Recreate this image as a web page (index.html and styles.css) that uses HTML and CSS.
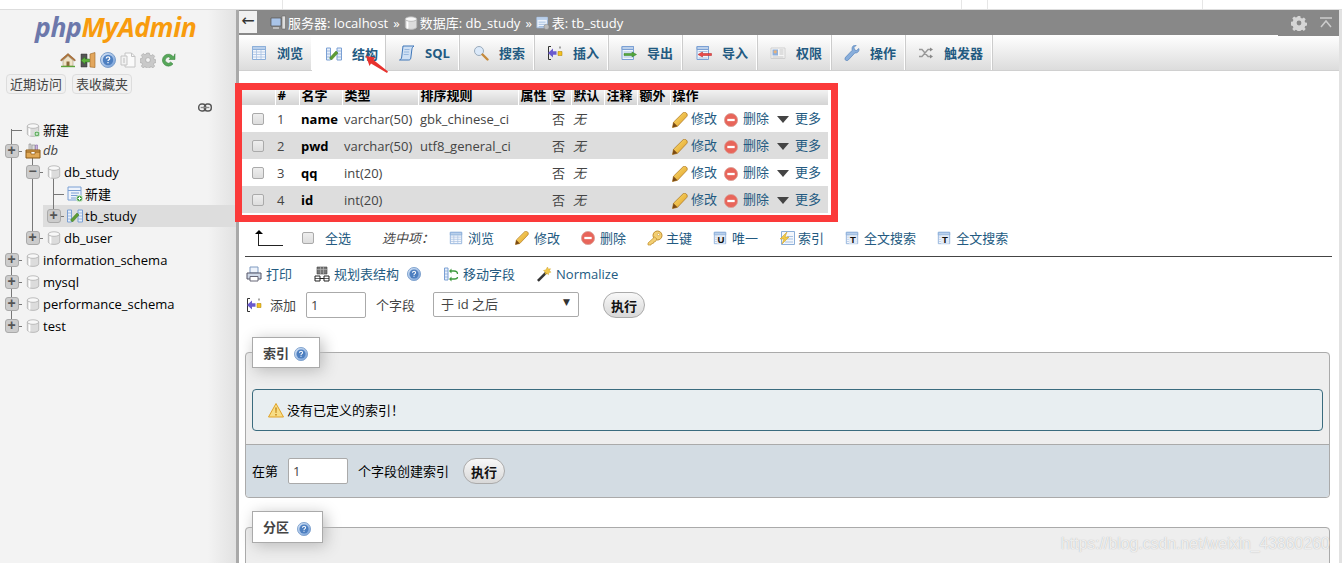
FILE: index.html
```html
<!DOCTYPE html>
<html lang="zh">
<head>
<meta charset="utf-8">
<title>phpMyAdmin</title>
<link rel="stylesheet" href="styles.css">
</head>
<body>
<svg class="defs" width="0" height="0" aria-hidden="true">
  <defs>
    <linearGradient id="blueg" x1="0" y1="0" x2="1" y2="1"><stop offset="0" stop-color="#dbe8f8"/><stop offset="1" stop-color="#6f9bd6"/></linearGradient>
    <linearGradient id="pencilg" x1="0" y1="0" x2="1" y2="1"><stop offset="0" stop-color="#fbe27a"/><stop offset="1" stop-color="#e09a1c"/></linearGradient>
    <symbol id="i-db" viewBox="0 0 16 16"><path d="M1.500 3.500v9c0 1.500 2.900 2.800 6.500 2.800s6.500-1.300 6.500-2.800v-9z" fill="#dcdcdc" stroke="#b5b5b5"/><path d="M4 5.500v9" stroke="#fff" stroke-width="2"/><ellipse cx="8" cy="3.500" rx="6.500" ry="2.600" fill="#f8f8f8" stroke="#b5b5b5"/></symbol>
    <symbol id="i-dbnew" viewBox="0 0 16 16"><use href="#i-db"/><circle cx="12.500" cy="12.500" r="3.200" fill="#3f9a3f" stroke="#dff0df"/><path d="M10.700 12.500h3.600M12.500 10.700v3.600" stroke="#fff"/></symbol>
    <symbol id="i-group" viewBox="0 0 16 16"><path d="M4 1h2v7H4zM7 2h3v6H7z" fill="#ddd" stroke="#888" stroke-width=".6"/><path d="M10.500 2h2v6h-2z" fill="#c9b8dc" stroke="#86a" stroke-width=".6"/><path d="M1 7h14v8H1z" fill="#e0a856" stroke="#8c5a17"/><path d="M1 9h14" stroke="#8c5a17"/><path d="M6 9v2h4V9" fill="#fff" stroke="#8c5a17" stroke-width=".7"/></symbol>
    <symbol id="i-tablenew" viewBox="0 0 16 16"><path d="M1 1h13v13H1z" fill="#eef3fb" stroke="#7ba0d4"/><path d="M1 4.500h13M4 7h8M4 9.500h8M4 12h8" stroke="#7ba0d4"/><circle cx="12.500" cy="12.500" r="3.200" fill="#3f9a3f" stroke="#dff0df"/><path d="M10.700 12.500h3.600M12.500 10.700v3.600" stroke="#fff"/></symbol>
    <symbol id="i-struct" viewBox="0 0 16 16"><path d="M.5 2v12h4V2zM11 2v12h4.500V2z" fill="#e6effa" stroke="#7ba0d4"/><path d="M.5 5h4M.5 8h4M.5 11h4M11 5h4.500M11 8h4.500M11 11h4.500" stroke="#7ba0d4" stroke-width=".7"/><path d="M3.500 12l2 2 6.500-7-2-2z" fill="#5d9c35" stroke="#3f7a1e" stroke-width=".5"/></symbol>
    <symbol id="i-browse" viewBox="0 0 16 16"><path d="M1.500 1.500h13v13h-13z" fill="#f4f7fc" stroke="#8cafd9"/><path d="M1.500 1.500h13v3h-13z" fill="#b9cfeb" stroke="#8cafd9"/><path d="M2 7h12M2 9.500h12M2 12h12M5.500 5v9M10 5v9" stroke="#a9c2e2" stroke-width=".8"/></symbol>
    <symbol id="i-sql" viewBox="0 0 16 16"><path d="M4 1h11c-1.500 1-2 2-2.200 4l-1 8c-.2 1.500-1 2-2 2H.5c1.300-.5 2-1.200 2.200-3z" fill="#cfe0f4" stroke="#3f76b8"/><path d="M5.500 4.500h5M5 7h5M4.700 9.500h5" stroke="#7ea6d6" stroke-width=".7"/></symbol>
    <symbol id="i-search" viewBox="0 0 16 16"><circle cx="6" cy="6" r="4.500" fill="#dbe9f9" stroke="#9ab"/><path d="M9.500 9.500l5 5" stroke="#c58a3d" stroke-width="2.400" stroke-linecap="round"/></symbol>
    <symbol id="i-insert" viewBox="0 0 16 16"><path d="M4 1.500H1.500v13H4" fill="none" stroke="#333"/><path d="M1 8l5-4.500v2.800h3.500v3.400H6v2.800z" fill="#6a5acd"/><path d="M11 6.500h4v4h-4z" fill="#f6c11f" stroke="#a37c00" stroke-width=".5"/><path d="M12.500 1.500h1v2h-1z" fill="#555"/></symbol>
    <symbol id="i-export" viewBox="0 0 16 16"><path d="M1 1.500h11.500v13H1z" fill="#f0f5fb" stroke="#7ba0d4"/><path d="M1 1.500h11.500v3H1z" fill="#bcd0ea" stroke="#7ba0d4"/><path d="M2.500 7h9M2.500 12h9" stroke="#a9c2e2"/><path d="M3 8.500h8V7l4.500 2.500L11 12v-1.500H3z" fill="#53a83c" stroke="#2f7a20" stroke-width=".5"/></symbol>
    <symbol id="i-import" viewBox="0 0 16 16"><path d="M1 1.500h11.500v13H1z" fill="#f0f5fb" stroke="#7ba0d4"/><path d="M1 1.500h11.500v3H1z" fill="#bcd0ea" stroke="#7ba0d4"/><path d="M2.500 6.500h9M2.500 13h9" stroke="#a9c2e2"/><path d="M15.500 8.500h-9V7L2 9.500 6.500 12v-1.500h9z" fill="#ec4a4a" stroke="#b52222" stroke-width=".5"/></symbol>
    <symbol id="i-priv" viewBox="0 0 16 16"><path d="M1 3h14v10.500H1z" fill="#f6f6f6" stroke="#cfcfcf"/><path d="M2.500 4.500h5.500v6H2.500z" fill="#8fb0dc"/><circle cx="5.200" cy="6.800" r="1.600" fill="#e8b27a"/><path d="M9.500 5h4M9.500 7h4M9.500 9h4M2.500 12h11" stroke="#bbb" stroke-width=".8"/></symbol>
    <symbol id="i-wrench" viewBox="0 0 16 16"><path d="M14.800 3.500l-2.300 2-2-.7-.5-2.300L12.200.3C9.800-.3 7.800 1.500 8 4l.2 1.300-6.500 6.800c-1 1.100-.9 2.400-.1 3.100.8.700 1.900.6 2.800-.3l6.500-7C13.300 8.500 15.800 6 14.800 3.500z" fill="#89aedb" stroke="#4878b4" stroke-width=".6"/></symbol>
    <symbol id="i-trigger" viewBox="0 0 16 16"><path d="M1 4.500h3l6 7h3M1 11.500h3l6-7h3" fill="none" stroke="#999" stroke-width="1.400"/><path d="M12 2.500l3 2-3 2zM12 9.500l3 2-3 2z" fill="#888"/></symbol>
    <symbol id="i-help" viewBox="0 0 16 16"><circle cx="8" cy="8" r="7.500" fill="url(#blueg)" stroke="#7c9fcb"/><circle cx="8" cy="8" r="5.200" fill="#4d7fc0"/><path d="M6.300 6.500c0-2.200 3.500-2.200 3.500 0 0 1.300-1.800 1.300-1.800 2.500" fill="none" stroke="#fff" stroke-width="1.200"/><path d="M7.400 10h1.200v1.200H7.400z" fill="#fff"/></symbol>
    <symbol id="i-home" viewBox="0 0 16 16"><path d="M.5 8L8 1.500 15.500 8l-1 1L8 3.500 1.500 9z" fill="#b5763a" stroke="#7a4a1c" stroke-width=".5"/><path d="M3 8.500L8 4.200l5 4.300V14H3z" fill="#efe3c8" stroke="#9b8a66" stroke-width=".5"/><path d="M6.500 9.500h3V14h-3z" fill="#8a6a3c"/><path d="M1 14.500h14" stroke="#5da33a" stroke-width="1.400"/></symbol>
    <symbol id="i-exit" viewBox="0 0 16 16"><path d="M1 2h6v13H1z" fill="#555" stroke="#333" stroke-width=".5"/><path d="M10 2l5-1.500v15L10 15z" fill="#e3a75d" stroke="#9a6525" stroke-width=".6"/><path d="M1 8.500l4-3.500v2h4.500v3H5v2z" fill="#5fb23e" stroke="#2f7a20" stroke-width=".5"/></symbol>
    <symbol id="i-docs" viewBox="0 0 16 16"><path d="M5 1h6.500L15 4.500V15H5z" fill="#fafafa" stroke="#c4c4c4"/><path d="M11.500 1v3.500H15" fill="none" stroke="#c4c4c4"/><path d="M1 4h6v9H1z" fill="#f2f2f2" stroke="#c4c4c4"/><path d="M3 6h2v5H3z" fill="#d8d8d8"/></symbol>
    <symbol id="i-gear" viewBox="0 0 16 16"><path d="M6.700 1h2.600l.4 2 1.500.6 1.700-1.100 1.800 1.800-1.100 1.700.6 1.500 2 .4v2.600l-2 .4-.6 1.500 1.100 1.700-1.800 1.800-1.700-1.100-1.500.6-.4 2H6.700l-.4-2-1.500-.6-1.700 1.100-1.800-1.800 1.100-1.700-.6-1.500-2-.4V6.900l2-.4.6-1.500-1.100-1.700 1.800-1.800 1.700 1.100 1.500-.6z" fill="#c9c9c9" stroke="#9d9d9d" stroke-width=".5"/><circle cx="8" cy="8" r="2.400" fill="#f3f3f3" stroke="#9d9d9d" stroke-width=".6"/></symbol>
    <symbol id="i-gearw" viewBox="0 0 16 16"><path d="M6.700 1h2.600l.4 2 1.500.6 1.700-1.100 1.800 1.800-1.100 1.700.6 1.500 2 .4v2.600l-2 .4-.6 1.500 1.100 1.700-1.800 1.800-1.700-1.100-1.500.6-.4 2H6.700l-.4-2-1.500-.6-1.700 1.100-1.800-1.800 1.100-1.700-.6-1.500-2-.4V6.900l2-.4.6-1.500-1.100-1.700 1.800-1.800 1.700 1.100 1.500-.6z" fill="#d5d5d5"/><circle cx="8" cy="8" r="2.400" fill="#888"/></symbol>
    <symbol id="i-collapse" viewBox="0 0 12 12"><path d="M0 1h12M1 10l5-6 5 6" fill="none" stroke="#ccc" stroke-width="1.500"/></symbol>
    <symbol id="i-reload" viewBox="0 0 16 16"><path d="M13.500 5A6 6 0 1 0 13 12l-2.300-2A3 3 0 1 1 10.500 6L9 7.500h6V1.800z" fill="#56a75a" stroke="#2f7a30" stroke-width=".5"/></symbol>
    <symbol id="i-link" viewBox="0 0 16 10"><rect x=".8" y="1" width="8" height="8" rx="3.500" fill="none" stroke="#555" stroke-width="1.600"/><rect x="7.200" y="1" width="8" height="8" rx="3.500" fill="none" stroke="#555" stroke-width="1.600"/><path d="M3 5h10" stroke="#888" stroke-width="1.600"/></symbol>
    <symbol id="i-server" viewBox="0 0 16 16"><path d="M1 3h10v8H1z" fill="#a9c4e8" stroke="#555" stroke-width=".7"/><path d="M3 12h6v2H3z" fill="#bbb"/><path d="M12 1h3.500v13H12z" fill="#ddd" stroke="#666" stroke-width=".6"/></symbol>
    <symbol id="i-tbl" viewBox="0 0 16 16"><path d="M1 1.500h12v12H1z" fill="#eef3fb" stroke="#9ab8de"/><path d="M1 1.500h12v3H1z" fill="#b9cfeb"/><path d="M3 7h8M3 9.500h8M3 12h8" stroke="#9ab8de"/><circle cx="12" cy="12.500" r="3" fill="#bbb" stroke="#777" stroke-width=".5"/></symbol>
    <symbol id="i-pencil" viewBox="0 0 16 16"><path d="M.5 15.500l1-5.300L11 .8c.8-.8 2.400-.7 3.400.3 1 1 1.200 2.600.3 3.500L5.500 14.300z" fill="url(#pencilg)" stroke="#a7701a" stroke-width=".7"/><path d="M.5 15.500l1-5.300 4 4.100z" fill="#7a4a14"/></symbol>
    <symbol id="i-del" viewBox="0 0 16 16"><circle cx="8" cy="8" r="7.500" fill="#e8655a" stroke="#d9a198"/><path d="M3.800 6.700h8.400v2.600H3.800z" fill="#fff"/></symbol>
    <symbol id="i-key" viewBox="0 0 16 16"><circle cx="10.500" cy="5.500" r="4.500" fill="#f3cf72" stroke="#c08c2a"/><circle cx="11.500" cy="4.500" r="1.100" fill="#fff" stroke="#c08c2a" stroke-width=".5"/><path d="M7.500 7L1 13v2h3l.7-1.500h1.500l.5-1.500h1.300L10 9z" fill="#f3cf72" stroke="#c08c2a" stroke-width=".7"/></symbol>
    <symbol id="i-tblu" viewBox="0 0 16 16"><use href="#i-browse"/><path d="M4.500 14.500h9V5h-9z" fill="#e3ebf6"/><text x="9" y="14" class="svg-letter" text-anchor="middle">U</text></symbol>
    <symbol id="i-tblt" viewBox="0 0 16 16"><use href="#i-browse"/><path d="M4.500 14.500h9V5h-9z" fill="#e3ebf6"/><text x="9" y="14" class="svg-letter" text-anchor="middle">T</text></symbol>
    <symbol id="i-index" viewBox="0 0 16 16"><path d="M2.500 1.500h13v13h-13z" fill="#f4f7fc" stroke="#8cafd9"/><path d="M8 6.500h6M8 9h6M6 12h8" stroke="#a9c2e2"/><path d="M8 2L1 9h4l-2 5 7-7H6z" fill="#f0c948" stroke="#c99a1c" stroke-width=".5"/></symbol>
    <symbol id="i-print" viewBox="0 0 16 16"><path d="M4 1h8v6H4z" fill="#eef3fb" stroke="#7f9ac0"/><path d="M1 7h14v6H1z" fill="#cfd9e8" stroke="#556"/><path d="M4 10.500h8V15H4z" fill="#fff" stroke="#667"/></symbol>
    <symbol id="i-schema" viewBox="0 0 16 16"><path d="M3 1h10v7H3z" fill="#777" stroke="#444" stroke-width=".6"/><path d="M3 3.500h10M6.500 1v7M9.500 1v7" stroke="#bbb" stroke-width=".6"/><path d="M1 10h5v5H1zM10 10h5v5h-5z" fill="#fff" stroke="#222"/><path d="M6 12.500h4" stroke="#222"/><path d="M1 12.500h5M10 12.500h5" stroke="#222" stroke-width=".7"/></symbol>
    <symbol id="i-move" viewBox="0 0 16 16"><path d="M1.500 2h3.500v12H1.500z" fill="#e6effa" stroke="#7ba0d4"/><path d="M1.500 5h3.500M1.500 8h3.500M1.500 11h3.500" stroke="#7ba0d4" stroke-width=".7"/><path d="M7 5h4c2 0 3.500 1 3.500 3" fill="none" stroke="#3f9a3f" stroke-width="1.300"/><path d="M14.500 11c0 1.300-1.500 2-3 2H7" fill="none" stroke="#3f9a3f" stroke-width="1.300"/><path d="M8.500 2.500v5L6 5zM8.500 10.500v5L6 13z" fill="#3f9a3f"/></symbol>
    <symbol id="i-wand" viewBox="0 0 16 16"><path d="M1 14l9-9 1.800 1.800-9 9z" fill="#333"/><path d="M11.500 1l.8 2 2.200-.3-1 2 1.500 1.500-2.200.3-.3 2.200-1.700-1.300-1.800 1 .3-2.200L7.500 4.500l2.200-.5z" fill="#f2c94c" stroke="#c99a1c" stroke-width=".4"/></symbol>
    <symbol id="i-warn" viewBox="0 0 16 16"><path d="M8 1.500L15.500 15H.5z" fill="#f7dd85" stroke="#e0a126"/><path d="M7.200 5.500h1.600l-.3 5.500h-1zM7.200 12h1.600v1.500H7.200z" fill="#c58a1c"/></symbol>
  </defs>
</svg>

<div class="topstrip"></div>
<div class="app">
  <aside class="sidebar">
    <div class="logo"><span class="logo-php">php</span><span class="logo-my">MyAdmin</span></div>
    <div class="quick">
      <svg class="ic16"><use href="#i-home"/></svg>
      <svg class="ic16"><use href="#i-exit"/></svg>
      <svg class="ic16"><use href="#i-help"/></svg>
      <svg class="ic16"><use href="#i-docs"/></svg>
      <svg class="ic16"><use href="#i-gear"/></svg>
      <svg class="ic16"><use href="#i-reload"/></svg>
    </div>
    <div class="sidetabs"><span class="sidetab">近期访问</span><span class="sidetab">表收藏夹</span></div>
    <div class="linkrow"><svg class="linkic"><use href="#i-link"/></svg></div>
    <div class="tree">
      <div class="trow"><span class="cell corner-first"></span><span class="cell"><svg class="ic14"><use href="#i-dbnew"/></svg></span><span class="tname">新建</span></div>
      <div class="trow short"><span class="cell vline hconn"><b class="tog">+</b></span><span class="cell bottom-line"><svg class="ic16"><use href="#i-group"/></svg></span><span class="tname em">db</span></div>
      <div class="trow"><span class="cell vline"></span><span class="cell vline-low hconn"><b class="tog">−</b></span><span class="cell bottom-line"><svg class="ic14"><use href="#i-db"/></svg></span><span class="tname">db_study</span></div>
      <div class="trow"><span class="cell vline"></span><span class="cell vline"></span><span class="cell corner-mid"></span><span class="cell"><svg class="ic16"><use href="#i-tablenew"/></svg></span><span class="tname">新建</span></div>
      <div class="trow"><span class="cell vline"></span><span class="cell vline"></span><div class="hl"><span class="cell top-line hconn"><b class="tog">+</b></span><span class="cell"><svg class="ic16"><use href="#i-struct"/></svg></span><span class="tname">tb_study</span></div></div>
      <div class="trow"><span class="cell vline"></span><span class="cell top-line hconn"><b class="tog">+</b></span><span class="cell"><svg class="ic14"><use href="#i-db"/></svg></span><span class="tname">db_user</span></div>
      <div class="trow"><span class="cell vline hconn"><b class="tog">+</b></span><span class="cell"><svg class="ic14"><use href="#i-db"/></svg></span><span class="tname">information_schema</span></div>
      <div class="trow"><span class="cell vline hconn"><b class="tog">+</b></span><span class="cell"><svg class="ic14"><use href="#i-db"/></svg></span><span class="tname">mysql</span></div>
      <div class="trow"><span class="cell vline hconn"><b class="tog">+</b></span><span class="cell"><svg class="ic14"><use href="#i-db"/></svg></span><span class="tname">performance_schema</span></div>
      <div class="trow"><span class="cell top-line hconn"><b class="tog">+</b></span><span class="cell"><svg class="ic14"><use href="#i-db"/></svg></span><span class="tname">test</span></div>
    </div>
  </aside>

  <main class="main">
    <div class="crumbs">
      <span class="back">←</span>
      <svg class="ic16 crumb-ic first"><use href="#i-server"/></svg><span>服务器: localhost</span><span class="sep">»</span>
      <svg class="ic14"><use href="#i-db"/></svg><span>数据库: db_study</span><span class="sep">»</span>
      <svg class="ic14"><use href="#i-tbl"/></svg><span>表: tb_study</span>
      <span class="crumb-tools"><svg class="ic16"><use href="#i-gearw"/></svg><svg class="collapse"><use href="#i-collapse"/></svg></span>
    </div>
    <nav class="tabs">
      <a class="tab t73 first-tab"><svg class="ic16"><use href="#i-browse"/></svg>浏览</a>
      <a class="tab t73 active p14"><svg class="ic16"><use href="#i-struct"/></svg>结构</a>
      <a class="tab p14"><svg class="ic16"><use href="#i-sql"/></svg>SQL</a>
      <a class="tab t75 p14"><svg class="ic16"><use href="#i-search"/></svg>搜索</a>
      <a class="tab"><svg class="ic16"><use href="#i-insert"/></svg>插入</a>
      <a class="tab"><svg class="ic16"><use href="#i-export"/></svg>导出</a>
      <a class="tab t75 p14"><svg class="ic16"><use href="#i-import"/></svg>导入</a>
      <a class="tab"><svg class="ic16"><use href="#i-priv"/></svg>权限</a>
      <a class="tab"><svg class="ic16"><use href="#i-wrench"/></svg>操作</a>
      <a class="tab wide"><svg class="ic16"><use href="#i-trigger"/></svg>触发器</a>
    </nav>

    <div class="redbox">
      <table class="fields">
        <colgroup><col class="c1"><col class="c2"><col class="c3"><col class="c4"><col class="c5"><col class="c6"><col class="c7"><col class="c8"><col class="c9"><col class="c10"><col class="c11"></colgroup>
        <thead><tr><th></th><th>#</th><th>名字</th><th>类型</th><th>排序规则</th><th>属性</th><th>空</th><th>默认</th><th>注释</th><th>额外</th><th>操作</th></tr></thead>
        <tbody>
          <tr><td class="chk"><span class="cb"></span></td><td>1</td><td class="fname">name</td><td>varchar(50)</td><td>gbk_chinese_ci</td><td></td><td>否</td><td class="em">无</td><td></td><td></td><td><div class="acts"><svg class="ic16"><use href="#i-pencil"/></svg><a>修改</a><svg class="ic14 a-del"><use href="#i-del"/></svg><a>删除</a><span class="tri"></span><a>更多</a></div></td></tr>
          <tr><td class="chk"><span class="cb"></span></td><td>2</td><td class="fname">pwd</td><td>varchar(50)</td><td>utf8_general_ci</td><td></td><td>否</td><td class="em">无</td><td></td><td></td><td><div class="acts"><svg class="ic16"><use href="#i-pencil"/></svg><a>修改</a><svg class="ic14 a-del"><use href="#i-del"/></svg><a>删除</a><span class="tri"></span><a>更多</a></div></td></tr>
          <tr><td class="chk"><span class="cb"></span></td><td>3</td><td class="fname">qq</td><td>int(20)</td><td></td><td></td><td>否</td><td class="em">无</td><td></td><td></td><td><div class="acts"><svg class="ic16"><use href="#i-pencil"/></svg><a>修改</a><svg class="ic14 a-del"><use href="#i-del"/></svg><a>删除</a><span class="tri"></span><a>更多</a></div></td></tr>
          <tr><td class="chk"><span class="cb"></span></td><td>4</td><td class="fname">id</td><td>int(20)</td><td></td><td></td><td>否</td><td class="em">无</td><td></td><td></td><td><div class="acts"><svg class="ic16"><use href="#i-pencil"/></svg><a>修改</a><svg class="ic14 a-del"><use href="#i-del"/></svg><a>删除</a><span class="tri"></span><a>更多</a></div></td></tr>
        </tbody>
      </table>
    </div>

    <div class="selbar">
      <span class="uparrow"></span>
      <span class="cb sel-cb"></span><a class="sel-all">全选</a>
      <em class="sel-label">选中项：</em>
      <a class="act"><svg class="ic14"><use href="#i-browse"/></svg>浏览</a>
      <a class="act"><svg class="ic14"><use href="#i-pencil"/></svg>修改</a>
      <a class="act"><svg class="ic14"><use href="#i-del"/></svg>删除</a>
      <a class="act"><svg class="ic16 wide-ic"><use href="#i-key"/></svg>主键</a>
      <a class="act"><svg class="ic14"><use href="#i-tblu"/></svg>唯一</a>
      <a class="act"><svg class="ic16 wide-ic"><use href="#i-index"/></svg>索引</a>
      <a class="act"><svg class="ic14"><use href="#i-tblt"/></svg>全文搜索</a>
      <a class="act"><svg class="ic14"><use href="#i-tblt"/></svg>全文搜索</a>
    </div>
    <div class="rule"></div>
    <div class="tools">
      <a class="act"><svg class="ic16"><use href="#i-print"/></svg>打印</a>
      <a class="act"><svg class="ic16"><use href="#i-schema"/></svg>规划表结构<svg class="ic14 helpic"><use href="#i-help"/></svg></a>
      <a class="act"><svg class="ic16"><use href="#i-move"/></svg>移动字段</a>
      <a class="act"><svg class="ic16"><use href="#i-wand"/></svg>Normalize</a>
    </div>
    <form class="addrow">
      <svg class="ic16"><use href="#i-insert"/></svg>
      <span class="add-l">添加</span>
      <input class="num" value="1">
      <span class="add-m">个字段</span>
      <span class="selectbox">于 id 之后<i class="sel-arrow">▼</i></span>
      <button type="button" class="btn add-go">执行</button>
    </form>

    <fieldset class="fs fs-index">
      <legend class="lg">索引<svg class="ic14 lg-help"><use href="#i-help"/></svg></legend>
      <div class="notice"><svg class="ic16"><use href="#i-warn"/></svg>没有已定义的索引！</div>
      <div class="fsfoot">在第<input class="num foot-num" value="1"><span class="foot-m">个字段创建索引</span><button type="button" class="btn foot-go">执行</button></div>
    </fieldset>
    <fieldset class="fs fs-part">
      <legend class="lg lg-part">分区<svg class="ic14 lg-help"><use href="#i-help"/></svg></legend>
    </fieldset>
  </main>
</div>

<svg class="annot" viewBox="0 0 24 18" aria-hidden="true"><path d="M1 0l9 1.500-1.500 2.500L23 15.500 22 17 6 7.500 4.500 10z" fill="#e8322e"/></svg>
<div class="watermark">https://blog.csdn.net/weixin_43860260</div>
</body>
</html>
```
FILE: styles.css
```css
* { box-sizing: border-box; }
html, body { margin: 0; height: 563px; overflow: hidden; background: #fff; }
body { position: relative; font: 13px/18px "Open Sans", "Noto Sans CJK SC", sans-serif; color: #444; }
a { color: #235a81; }
.defs { position: absolute; }
.svg-letter { font: bold 11px "Liberation Sans", sans-serif; fill: #111; }

.topstrip {
  height: 10px;
  border-bottom: 1px solid #ddd;
  background:
    linear-gradient(#e6e6e6, #e6e6e6) 282px 0 / 1px 100% no-repeat,
    linear-gradient(#e6e6e6, #e6e6e6) 961px 0 / 1px 100% no-repeat,
    linear-gradient(#e6e6e6, #e6e6e6) 987px 0 / 1px 100% no-repeat,
    linear-gradient(#e6e6e6, #e6e6e6) 1202px 0 / 1px 100% no-repeat;
}
.app { display: flex; height: 553px; }
.ic16 { width: 16px; height: 16px; flex: none; }
.ic14 { width: 14px; height: 14px; flex: none; }

/* sidebar */
.sidebar {
  width: 236px; flex: none; padding-top: 2px;
  background: linear-gradient(90deg, #f3f3f3 0, #f3f3f3 88%, #e2e2e2 100%);
}
.logo { height: 31px; padding-left: 35px; font: italic bold 26.5px/31px "Open Sans", sans-serif; letter-spacing: -.35px; }
.logo-php { color: #6c78ab; }
.logo-my { color: #f89c0e; }
.quick { display: flex; gap: 4px; height: 16px; margin-top: 9px; padding-left: 60px; }
.sidetabs { display: flex; gap: 6px; margin-top: 6px; padding-left: 6px; }
.sidetab { width: 60px; height: 20px; border: 1px solid #ddd; border-radius: 4px; background: #f1f1f1; color: #444; font-size: 13px; line-height: 18px; text-align: center; }
.linkrow { display: flex; justify-content: flex-end; padding-right: 24px; height: 10px; margin-top: 9px; }
.linkic { width: 14px; height: 9px; }
.tree { margin-top: 6px; padding-left: 1px; color: #000; }
.trow { display: flex; height: 22px; align-items: stretch; }
.trow.short { height: 20px; }
.cell { width: 21px; flex: none; display: flex; align-items: center; justify-content: center; background-repeat: no-repeat; }
.tname { line-height: 22px; white-space: nowrap; }
.short .tname { line-height: 18px; color: #444; }
.em { font-style: italic; }
.vline { background-image: linear-gradient(#777, #777); background-size: 1px 100%; background-position: 10px 0; }
.vline-low { background-image: linear-gradient(#777, #777); background-size: 1px 100%; background-position: 10px 50%; }
.top-line { background-image: linear-gradient(#777, #777); background-size: 1px 11px; background-position: 10px 0; }
.bottom-line { background-image: linear-gradient(#777, #777); background-size: 1px 6px; background-position: 10px 100%; }
.hconn { position: relative; }
.hconn::after { content: ""; position: absolute; left: 16px; right: 0; top: 50%; height: 1px; background: #777; }
.corner-first, .corner-mid {
  background-image: linear-gradient(#777, #777), linear-gradient(#777, #777);
  background-position: 10px 100%, 10px 50%;
  background-size: 1px 12px, 11px 1px;
}
.corner-mid { background-size: 1px 100%, 11px 1px; background-position: 10px 0, 10px 50%; }
.tog { position: relative; z-index: 1; width: 14px; height: 14px; border-radius: 3px; border: 1px solid #aaa; background: #ccc; color: #555; font: bold 14px/11px "Liberation Sans", sans-serif; text-align: center; }
.hl { display: flex; flex: 1; background: #ddd; }

/* main */
.main { flex: 1; min-width: 0; border-left: 3px solid #a9a9a9; border-right: 3px solid #e2e2e2; position: relative; }
.crumbs { display: flex; align-items: center; height: 25px; background: #888; color: #fff; white-space: nowrap; gap: 2px; }
.back { width: 18px; height: 22px; margin: 0 0 2px 0; background: #f1f1f1; color: #333; text-align: center; font: 16px/20px "DejaVu Sans", sans-serif; flex: none; }
.crumb-ic.first { margin-left: 11px; }
.sep { margin: 0 2px 0 3px; }
.crumb-tools { display: flex; align-items: center; gap: 13px; margin-left: auto; height: 26px; align-self: flex-start; background: #888; padding: 0 7px 0 13px; position: relative; z-index: 1; }
.collapse { width: 12px; height: 12px; flex: none; }

.tabs { display: flex; height: 36px; background: linear-gradient(#fff, #dcdcdc); border-bottom: 1px solid #d0d0d0; }
.tab { display: flex; align-items: center; gap: 10px; width: 74px; padding-left: 13px; border-right: 1px solid #fff; box-shadow: 1px 0 0 #ccc; color: #235a81; font-weight: bold; white-space: nowrap; }
.tab.first-tab { padding-left: 12px; }
.tab.p14 { padding-left: 14px; }
.tab.t73 { width: 73px; }
.tab.t75 { width: 75px; }
.tab.active { background: #fff; height: 37px; }
.tab.wide { width: 87px; }

.redbox { width: 603px; height: 139px; margin: 12px 0 0 -4px; border: 7px solid #fb3a3a; background: #fff; }
.fields { width: 586px; table-layout: fixed; border-collapse: collapse; }
.c1 { width: 33px; } .c2 { width: 24px; } .c3 { width: 43px; } .c4 { width: 76px; } .c5 { width: 100px; } .c6 { width: 32px; }
.c7 { width: 21px; } .c8 { width: 33px; } .c9 { width: 33px; } .c10 { width: 33px; } .c11 { width: 158px; }
.fields th { height: 15px; padding: 0 0 0 2px; border-right: 1px solid #fff; background: linear-gradient(#f2f2f2, #d4d4d4); color: #000; font-weight: bold; line-height: 11px; text-align: left; vertical-align: top; white-space: nowrap; overflow: hidden; }
.fields td { height: 27px; padding: 0 0 0 2px; white-space: nowrap; overflow: hidden; color: #444; }
.fields tbody tr:nth-child(even) td { background: #ddd; }
.fields .fname { color: #000; font-weight: bold; }
.fields .chk { padding-left: 10px; }
.chk .cb { margin-top: -3px; }
.cb { display: inline-block; width: 12px; height: 12px; border: 1px solid #aaa; border-radius: 2px; background: linear-gradient(#eee, #ddd); vertical-align: middle; }
.acts { display: flex; align-items: center; }
.acts svg { margin-top: 3px; }
.acts a { position: relative; top: -1px; margin-left: 3px; }
.acts .a-del { margin-left: 7px; margin-right: 2px; }
.tri { width: 0; height: 0; border: 6px solid transparent; border-top: 7px solid #444; border-bottom: 0; margin: 2px 3px 0 8px; }

.selbar { display: flex; align-items: center; height: 20px; margin-top: 6px; padding-left: 16px; }
.uparrow { width: 28px; height: 15px; margin-right: 19px; background:
  linear-gradient(#222, #222) 3px 100% / 25px 1px no-repeat,
  linear-gradient(#222, #222) 3px 100% / 1px 13px no-repeat; position: relative; }
.uparrow::before { content: ""; position: absolute; left: 0; top: -1px; border: 4px solid transparent; border-bottom: 4px solid #000; border-top: 0; }
.sel-cb { margin-right: 11px; }
.sel-all { margin-right: 31px; }
.sel-label { margin-right: 17px; color: #444; width: 50px; flex: none; white-space: nowrap; }
.act { display: flex; align-items: center; gap: 5px; margin-right: 21px; white-space: nowrap; }
.wide-ic { margin-right: -2px; }
.rule { height: 1px; margin: 8px 7px 0 6px; background: #444; }
.tools { display: flex; align-items: center; height: 20px; margin-top: 7px; padding-left: 7px; }
.tools .act { gap: 4px; margin-right: 22px; }
.tools .act:nth-child(3) { margin-right: 21px; }
.helpic { margin-left: 4px; }
.addrow { display: flex; align-items: center; height: 28px; margin: 7px 0 0; padding-left: 7px; }
.add-l { margin-left: 8px; margin-right: 10px; }
.num { width: 60px; height: 26px; padding: 0 4px; border: 1px solid #aaa; border-radius: 2px; font: 13px "Open Sans", sans-serif; color: #444; background: #fff; }
.add-m { margin: 0 18px 0 10px; }
.selectbox { display: flex; align-items: center; justify-content: space-between; width: 146px; height: 25px; padding: 0 8px 0 7px; border: 1px solid #aaa; border-radius: 2px; margin-top: -2px; }
.sel-arrow { font: 9px "DejaVu Sans", sans-serif; color: #333; margin-top: -4px; }
.btn { width: 42px; height: 26px; padding: 0; border: 1px solid #aaa; border-radius: 13px; background: linear-gradient(#f8f8f8, #d8d8d8); color: #111; font: bold 13px "Open Sans", "Noto Sans CJK SC", sans-serif; }
.add-go { margin-left: 24px; }

.fs { margin: 18px 9px 0 6px; padding: 0; border: 1px solid #aaa; border-radius: 4px; background: #eee; min-width: 0; }
.fs-part { margin-top: 13px; height: 80px; }
.lg { display: flex; align-items: center; height: 31px; margin-left: 6px; padding: 0 11px 0 10px; border: 1px solid #aaa; background: #fff; box-shadow: 3px 3px 15px #bbb; color: #444; font-weight: bold; }
.lg-part { height: 32px; padding-right: 11px; }
.lg-part .lg-help { margin-left: 8px; }
.lg-help { margin-left: 5px; margin-top: 3px; }
.notice { display: flex; align-items: center; gap: 3px; height: 42px; margin: 21px 6px 13px 6px; padding-left: 15px; border: 1px solid #3a6b7e; border-radius: 4px; background: #e8eef1; color: #000; }
.fsfoot { display: flex; align-items: center; height: 53px; padding-left: 6px; border-top: 1px solid #aaa; background: #d3dce3; color: #000; border-radius: 0 0 4px 4px; }
.foot-num { margin-left: 10px; }
.foot-m { margin: 0 14px 0 10px; }

.annot { position: absolute; left: 365px; top: 56px; width: 24px; height: 18px; }
.watermark { position: absolute; left: 1061px; top: 534px; font: 15.800px/20px "Liberation Sans", sans-serif; color: rgba(255,255,255,.8); text-shadow: 0 0 1px rgba(150,150,150,.8); white-space: nowrap; }
```
